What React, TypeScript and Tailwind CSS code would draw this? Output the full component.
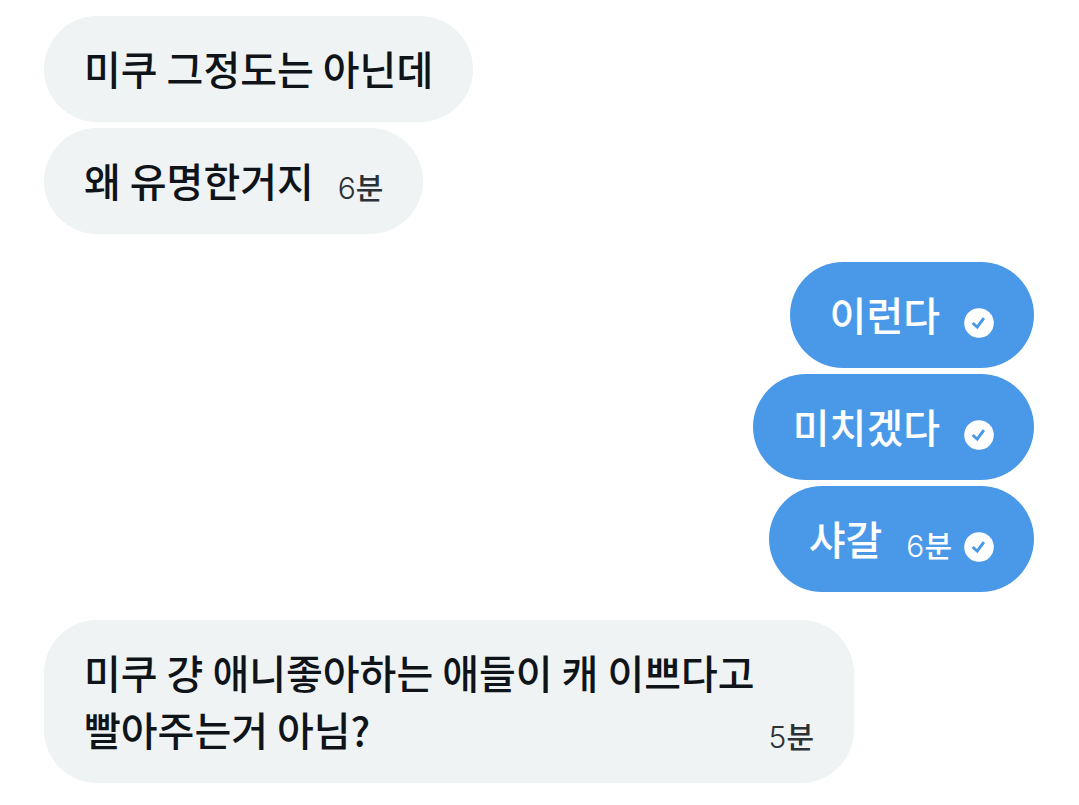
import { clsx } from 'clsx'

interface Message {
  id: number
  text: string
  minutes?: number
}

interface Group {
  id: number
  mine: boolean
  messages: Message[]
}

const groups: Group[] = [
  {
    id: 0,
    mine: false,
    messages: [
      { id: 0, text: '미쿠 그정도는 아닌데' },
      { id: 1, text: '왜 유명한거지', minutes: 6 },
    ],
  },
  {
    id: 1,
    mine: true,
    messages: [
      { id: 2, text: '이런다' },
      { id: 3, text: '미치겠다' },
      { id: 4, text: '샤갈', minutes: 6 },
    ],
  },
  {
    id: 2,
    mine: false,
    messages: [
      {
        id: 5,
        text: '미쿠 걍 애니좋아하는 애들이 캐 이쁘다고\n빨아주는거 아님?',
        minutes: 5,
      },
    ],
  },
]

function SentIcon() {
  return (
    <svg viewBox="0 0 30 30" className="size-[30px]" role="img" aria-label="Sent">
      <circle cx="15" cy="15" r="14.8" fill="#fff" />
      <path
        d="M8.6 15l4.6 4.1 6.7-8.9"
        fill="none"
        stroke="#4a99e9"
        strokeWidth="3"
      />
    </svg>
  )
}

function Bubble({ message, mine }: { message: Message; mine: boolean }) {
  const isMultiline = message.text.includes('\n')

  return (
    <li
      className={clsx(
        'flex w-fit items-end rounded-[53px] px-10 pt-6 pb-[25px]',
        mine ? 'bg-[#4a99e9] text-white' : 'bg-[#eff3f4] text-[#0f1419]',
      )}
    >
      <p className="whitespace-pre-line text-[40px] leading-[57px] font-medium">
        {message.text}
      </p>

      {/* Time and status */}
      {(mine || message.minutes) && (
        <div
          className={clsx(
            'flex h-10 shrink-0 items-center gap-3',
            isMultiline ? 'ml-3.5' : 'ml-6',
          )}
        >
          {message.minutes && (
            <time
              className={clsx(
                'pb-1 text-[30px] leading-10 font-medium',
                !mine && 'text-[#2b3236]',
              )}
            >
              <span className="font-['Inter',sans-serif] font-light">
                {message.minutes}
              </span>
              분
            </time>
          )}
          {mine && <SentIcon />}
        </div>
      )}
    </li>
  )
}

export default function App() {
  return (
    <main className="flex min-h-screen flex-col gap-7 bg-white py-4 pr-[45px] pl-11 font-['Noto_Sans_CJK_KR',sans-serif]">
      {groups.map((group) => (
        <ul
          key={group.id}
          className={clsx(
            'flex flex-col gap-1.5',
            group.mine ? 'items-end' : 'items-start',
          )}
        >
          {group.messages.map((message) => (
            <Bubble key={message.id} message={message} mine={group.mine} />
          ))}
        </ul>
      ))}
    </main>
  )
}
